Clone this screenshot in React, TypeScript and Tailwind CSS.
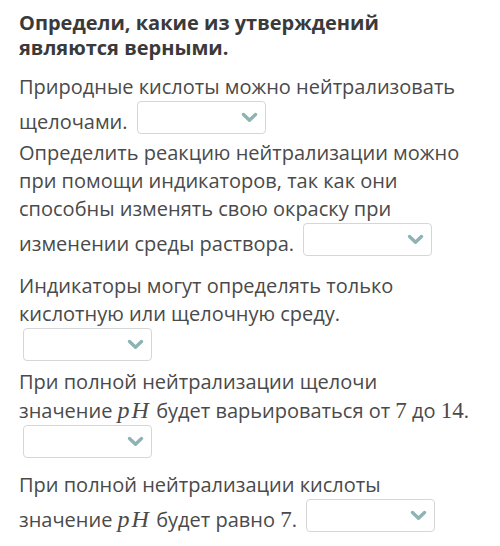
import React from 'react'

function Select() {
  return (
    <span className="ml-[4px] inline-block h-[33px] w-[129px] overflow-hidden rounded-[4px] border border-[#d3d7d9] bg-white align-[-5px]">
      <span className="flex h-full items-center justify-end pr-[7px]">
        <svg width="17" height="11" viewBox="0 0 17 11" fill="none">
          <path d="M2.5 2.5 L8.5 8.2 L14.5 2.5" stroke="#8db3b5" strokeWidth="3.4" strokeLinecap="round" strokeLinejoin="round" />
        </svg>
      </span>
    </span>
  )
}

function Num({ children }: { children: React.ReactNode }) {
  return <span className="font-['Liberation_Serif',serif] text-[23px]">{children}</span>
}

function PH() {
  return <span className="font-['Liberation_Serif',serif] text-[24px] italic tracking-[2px]">pH</span>
}

export default function App() {
  return (
    <div className="h-[546px] w-[500px] bg-white pl-[19px] pr-[28px] pt-[10px] font-['Open_Sans',sans-serif] text-[#4a4a4a]">
      <h1 className="text-[20px] font-bold leading-[25px] text-[#3a3a3a]">
        Определи, какие из утверждений являются верными.
      </h1>

      <p className="mt-[13px] text-[20px] leading-[28px]">
        Природные кислоты можно нейтрализовать щелочами. <Select />
      </p>

      <p className="mt-[3px] text-[20px] leading-[28px]">
        Определить реакцию нейтрализации можно при помощи индикаторов, так как они способны изменять свою окраску при
        изменении среды раствора. <Select />
      </p>

      <p className="mt-[14px] text-[20px] leading-[28px]">
        Индикаторы могут определять только кислотную или щелочную среду. <Select />
      </p>

      <p className="mt-[5px] text-[20px] leading-[28px]">
        При полной нейтрализации щелочи значение <PH /> будет варьироваться от <Num>7</Num> до <Num>14</Num>.{' '}
        <Select />
      </p>

      <p className="mt-[11px] text-[20px] leading-[28px]">
        При полной нейтрализации кислоты значение <PH /> будет равно <Num>7</Num>. <Select />
      </p>
    </div>
  )
}
